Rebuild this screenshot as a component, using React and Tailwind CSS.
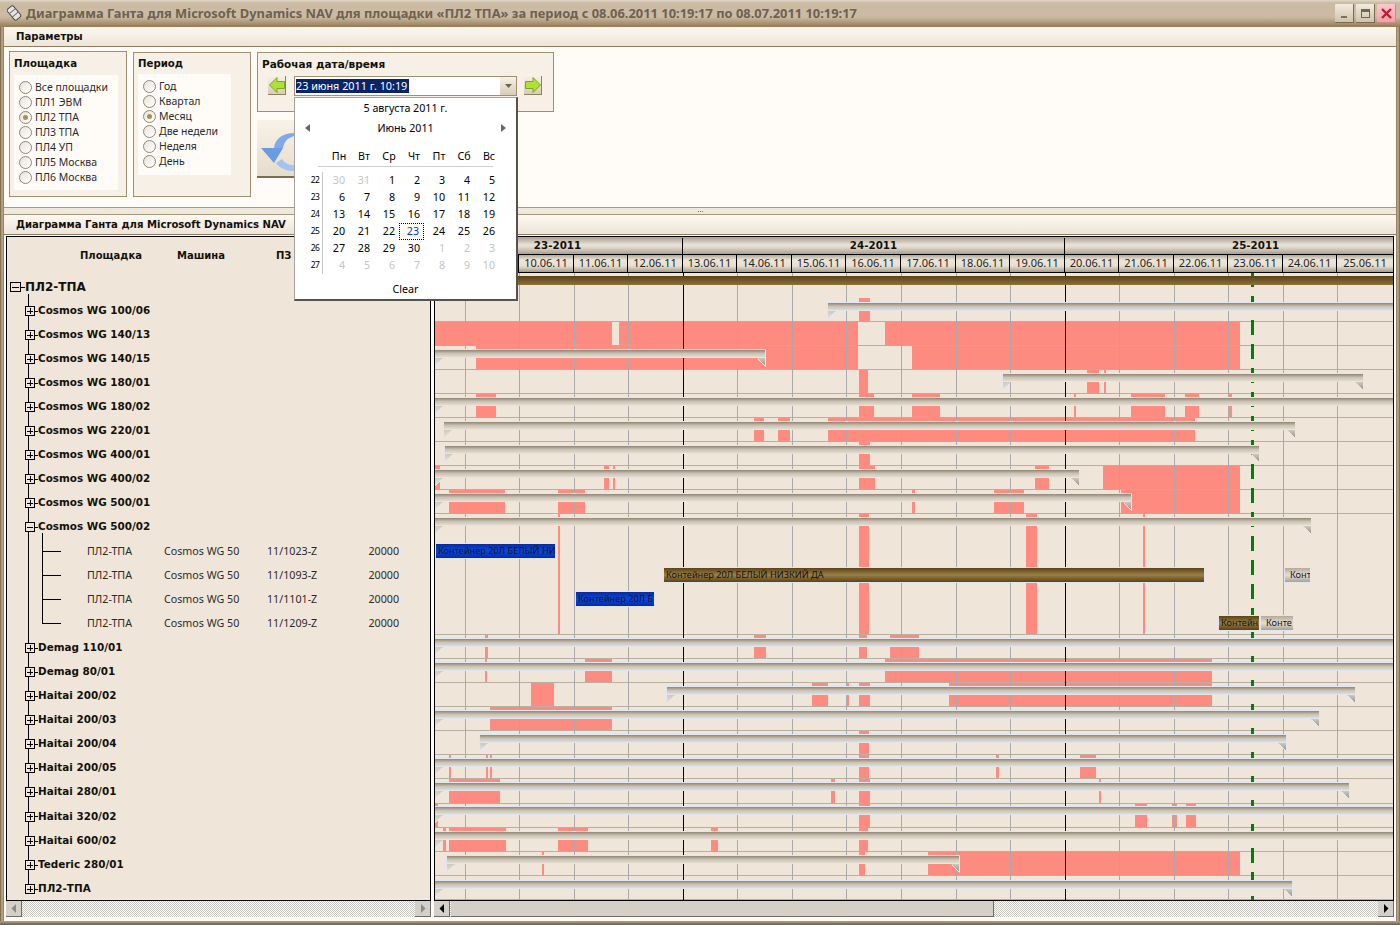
import React from "react";

const gridX = [465, 519, 574, 628, 683, 737, 792, 846, 901, 956, 1010, 1065, 1119, 1174, 1228, 1283, 1337];
const days = ["08.06.11","09.06.11","10.06.11","11.06.11","12.06.11","13.06.11","14.06.11","15.06.11","16.06.11","17.06.11","18.06.11","19.06.11","20.06.11","21.06.11","22.06.11","23.06.11","24.06.11","25.06.11"];
const edges = [435, ...gridX, 1393];

const rows = [
  { h: 24, s: [[859, 870]], b: [828, 1393, 302] },
  { h: 24, s: [[435, 612], [619, 858], [885, 1240]] },
  { h: 24, s: [[476, 858], [912, 1240]], b: [435, 765, 349] },
  { h: 24, s: [[859, 868], [1087, 1099], [1104, 1106]], b: [1003, 1363, 373] },
  { h: 24, s: [[476, 496], [859, 874], [912, 940], [1074, 1076], [1131, 1165], [1185, 1199], [1229, 1232]], b: [435, 1393, 397] },
  { h: 24, s: [[754, 764], [778, 790], [828, 1195]], b: [444, 1295, 421] },
  { h: 24, s: [[859, 870]], b: [445, 1259, 445] },
  { h: 24, s: [[435, 440], [604, 609], [613, 615], [859, 875], [1035, 1049], [1103, 1240]], b: [435, 1079, 469] },
  { h: 24, s: [[449, 505], [558, 585], [912, 915], [994, 1024], [1121, 1240]], b: [435, 1131, 493] },
  { h: 121, s: [[558, 560], [859, 869], [1026, 1037], [1143, 1145]], b: [435, 1311, 517], tasks: true },
  { h: 24, s: [[485, 488], [754, 766], [859, 867], [890, 919]], b: [435, 1393, 638] },
  { h: 24, s: [[485, 487], [585, 612], [885, 1212]], b: [435, 1393, 662] },
  { h: 24, s: [[531, 554], [812, 828], [846, 849], [859, 870], [949, 1212]], b: [667, 1355, 686] },
  { h: 24, s: [[490, 612]], b: [435, 1319, 710] },
  { h: 24, s: [[859, 869]], b: [480, 1286, 734] },
  { h: 24, s: [[449, 451], [486, 488], [490, 492], [859, 869], [996, 999], [1080, 1096]], b: [435, 1393, 758] },
  { h: 25, s: [[449, 500], [831, 835], [859, 870], [1099, 1101]], b: [435, 1349, 782] },
  { h: 24, s: [[435, 438], [859, 870], [1135, 1147], [1172, 1177], [1186, 1196]], b: [435, 1393, 806] },
  { h: 24, s: [[443, 446], [449, 506], [558, 588], [711, 718], [859, 868]], b: [435, 1393, 831] },
  { h: 24, s: [[542, 544], [859, 865], [928, 1240]], b: [447, 959, 855] },
  { h: 24, s: [], b: [435, 1292, 880] },
];

const tasks = [
  { x: 435, w: 121, y: 543, c: "blue", t: "Контейнер 20Л БЕЛЫЙ НИ" },
  { x: 663, w: 542, y: 567, c: "brown", t: "Контейнер 20Л БЕЛЫЙ НИЗКИЙ ДА" },
  { x: 1284, w: 27, y: 567, c: "gray", t: "Конт" },
  { x: 575, w: 80, y: 591, c: "blue", t: "Контейнер 20Л Б" },
  { x: 1218, w: 42, y: 615, c: "brown", t: "Контейн" },
  { x: 1260, w: 34, y: 615, c: "gray", t: "Конте" },
];

const taskClass = {
  blue: "pl-[2px] bg-gradient-to-b from-[#0a2c9c] via-[#0648e4] to-[#0a2c9c]",
  brown: "pl-[2px] bg-gradient-to-b from-[#5c4318] via-[#9a8048] to-[#5c4318]",
  gray: "pl-[5px] bg-gradient-to-b from-[#b3aa9a] via-[#e6dfd4] to-[#aaa191]",
};

const machines = [
  "Cosmos WG 100/06", "Cosmos WG 140/13", "Cosmos WG 140/15", "Cosmos WG 180/01", "Cosmos WG 180/02",
  "Cosmos WG 220/01", "Cosmos WG 400/01", "Cosmos WG 400/02", "Cosmos WG 500/01",
];
const machinesAfter = [
  ["Demag 110/01", 24], ["Demag 80/01", 24], ["Haitai 200/02", 24], ["Haitai 200/03", 24], ["Haitai 200/04", 24],
  ["Haitai 200/05", 24], ["Haitai 280/01", 24], ["Haitai 320/02", 25], ["Haitai 600/02", 24], ["Tederic 280/01", 24], ["ПЛ2-ТПА", 24],
];
const children = ["11/1023-Z", "11/1093-Z", "11/1101-Z", "11/1209-Z"];

const BOLD = "[font-family:'DejaVu_Sans',sans-serif] font-bold";

function Radio({ label, checked }) {
  return (
    <div className="flex h-[15px] items-center gap-[3px] text-[10.5px] text-[#2b2b2b]">
      <span className="flex h-[13px] w-[13px] items-center justify-center rounded-full border border-[#8d8777] bg-gradient-to-br from-[#e9e4da] to-[#ffffff]">
        {checked && <span className="h-[5px] w-[5px] rounded-full bg-[#ab8c5c]" />}
      </span>
      <span>{label}</span>
    </div>
  );
}

function Section({ children }) {
  return (
    <div className={`flex h-[20px] items-center border-b border-[#8f7f60] bg-gradient-to-b from-[#fdf9f2] to-[#ece4d7] pl-3 pt-px text-[10.1px] text-[#14110c] ${BOLD}`}>
      {children}
    </div>
  );
}

function Expander({ open }) {
  return (
    <span className="relative flex h-[10px] w-[10px] shrink-0 items-center justify-center border border-black bg-[#efe6d9]">
      <span className="h-px w-[6px] bg-black" />
      {!open && <span className="absolute h-[6px] w-px bg-black" />}
    </span>
  );
}

function Machine({ name, h = 24, open }) {
  return (
    <div className="relative flex items-center pl-[18px]" style={{ height: h }}>
      <Expander open={open} />
      <span className="h-px w-[3px] bg-black" />
      <span className={`text-[10.4px] text-[#14110c] ${BOLD}`}>{name}</span>
    </div>
  );
}

function ScrollBtn({ dir, dark }) {
  return (
    <div className="flex h-full w-[16px] shrink-0 items-center justify-center border-b border-r border-[#6f6c66] border-t-white border-l-white bg-[#d4d0c8]">
      <svg width="6" height="9" viewBox="0 0 6 9">
        <polygon points={dir === "l" ? "5,0 5,9 0.5,4.5" : "1,0 1,9 5.5,4.5"} fill={dark ? "#000" : "#8c8a85"} />
      </svg>
    </div>
  );
}

const CHECKER = "bg-[repeating-conic-gradient(#c9c7c1_0_25%,#ffffff_0_50%)] bg-[length:2px_2px]";

function Notch({ side }) {
  return side === "l" ? (
    <svg width="9" height="9" viewBox="0 0 9 9" className="absolute left-[-1px] top-[8px]">
      <polygon points="0,0 9,0 0,9" fill="url(#notchL)" />
      <path d="M0.5 0V8.5L8 1" stroke="#e2e8f0" fill="none" />
    </svg>
  ) : (
    <svg width="9" height="9" viewBox="0 0 9 9" className="absolute right-[-1px] top-[8px]">
      <polygon points="9,0 0,0 9,9" fill="url(#notchR)" />
      <path d="M8.5 0V8.5L1 1" stroke="#e2e8f0" fill="none" />
    </svg>
  );
}

function Bar({ x1, x2, y }) {
  const open = x2 >= 1393;
  const inset = x1 > 435;
  const left = inset ? x1 - 436 : 0;
  const right = open ? 958 : x2 - 434;
  return (
    <div
      className={`absolute z-30 h-[9px] border-y border-[#dfe6f0] bg-gradient-to-b from-[#918776] via-[#cbc3b5] to-[#e2dbcf] ${open ? "" : "border-r"} ${inset ? "border-l" : ""}`}
      style={{ left, width: right - left, top: y }}
    >
      <Notch side="l" />
      {!open && <Notch side="r" />}
    </div>
  );
}

function ChartRow({ row, top }) {
  return (
    <div className="relative border-b border-[#b5afa6]" style={{ height: row.h }}>
      {row.s.map(([a, b]) => (
        <div key={a} className="absolute inset-y-0 bg-[#fd8b80]" style={{ left: a - 435, width: b - a }} />
      ))}
      {row.b && <Bar x1={row.b[0]} x2={row.b[1]} y={row.b[2] - top} />}
      {row.tasks &&
        tasks.map((t) => (
          <div
            key={t.x}
            className={`absolute z-30 flex h-[16px] items-center overflow-hidden whitespace-nowrap border border-[#dfe6f0] text-[9.2px] leading-none text-[#15130f] ${taskClass[t.c]}`}
            style={{ left: t.x - 435, width: t.w, top: t.y - top }}
          >
            {t.t}
          </div>
        ))}
    </div>
  );
}

function GreenArrow({ dir }) {
  return (
    <div className="flex h-[19px] w-[18px] items-center justify-center border-b border-r border-[#8f7f60] bg-gradient-to-b from-[#f7f1e6] to-[#d8ccb8]">
      <svg width="16" height="16" viewBox="0 0 16 16">
        <polygon
          points={dir === "l" ? "0.5,8 8,0.5 8,4.5 15.5,4.5 15.5,11.5 8,11.5 8,15.5" : "15.5,8 8,0.5 8,4.5 0.5,4.5 0.5,11.5 8,11.5 8,15.5"}
          fill="#aee03a"
          stroke="#7ba81f"
        />
      </svg>
    </div>
  );
}

function Calendar() {
  const weeks = [
    [22, ["30", "31", 1, 2, 3, 4, 5]],
    [23, [6, 7, 8, 9, 10, 11, 12]],
    [24, [13, 14, 15, 16, 17, 18, 19]],
    [25, [20, 21, 22, 23, 24, 25, 26]],
    [26, [27, 28, 29, 30, "1", "2", "3"]],
    [27, ["4", "5", "6", "7", "8", "9", "10"]],
  ];
  return (
    <div className="absolute left-[294px] top-[97px] z-50 h-[204px] w-[224px] border border-[#a5a29c] border-b-2 border-r-2 border-b-[#55534e] border-r-[#55534e] bg-white text-[10.7px] text-black">
      <div className="flex h-[21px] items-center justify-center">5 августа 2011 г.</div>
      <div className="flex h-[18px] items-center justify-between px-[10px]">
        <svg width="5" height="8" viewBox="0 0 5 8"><polygon points="5,0 5,8 0,4" fill="#6b675e" /></svg>
        <span>Июнь 2011</span>
        <svg width="5" height="8" viewBox="0 0 5 8"><polygon points="0,0 0,8 5,4" fill="#6b675e" /></svg>
      </div>
      <div className="ml-[23px] mt-[12px] flex h-[18px] w-[175px] items-center border-b border-[#cfcfcf] pb-[2px] pl-[6px]">
        {["Пн", "Вт", "Ср", "Чт", "Пт", "Сб", "Вс"].map((d) => (
          <span key={d} className="w-[25px] shrink-0 pl-[5px] text-center">{d}</span>
        ))}
      </div>
      <div className="ml-[14px] mt-[5px] flex flex-col">
        {weeks.map(([w, cells]) => (
          <div key={w} className="flex h-[17px] items-center">
            <span className="flex h-[17px] w-[14px] items-center justify-center border-r border-[#c8c8c8] pr-px text-[8.5px] tracking-[-0.5px]">{w}</span>
            <span className="w-px" />
            {cells.map((c, i) => {
              const muted = typeof c === "string";
              const today = c === 23;
              return (
                <span
                  key={i}
                  className={`flex h-[17px] w-[25px] items-center justify-end pr-[4px] ${muted ? "text-[#c4c4c4]" : ""} ${today ? "border border-dotted border-black bg-[#fffbf0] text-[#0a2ee6]" : ""}`}
                >
                  {c}
                </span>
              );
            })}
          </div>
        ))}
      </div>
      <div className="mt-[7px] text-center">Clear</div>
    </div>
  );
}

export default function App() {
  let top = 298;
  const placed = rows.map((r) => {
    const t = top;
    top += r.h;
    return [r, t];
  });
  return (
    <div className="relative flex h-[925px] w-[1400px] flex-col overflow-hidden bg-[#b7a486] [font-family:'Noto_Sans',sans-serif]">
      <svg className="absolute h-0 w-0">
        <defs>
          <linearGradient id="notchL" x1="0" y1="0" x2="0" y2="1">
            <stop offset="0" stopColor="#cfc8bb" />
            <stop offset="1" stopColor="#efe6d9" />
          </linearGradient>
          <linearGradient id="notchR" x1="0" y1="0" x2="0" y2="1">
            <stop offset="0" stopColor="#cfc8bb" />
            <stop offset="1" stopColor="#8f8b86" />
          </linearGradient>
        </defs>
      </svg>

      {/* title bar */}
      <div className="flex h-[27px] shrink-0 items-center bg-[linear-gradient(#e0d6c6_0,#cbbba2_3px,#cbbba2_17px,#957a54_27px)] pl-[7px] pr-[4px]">
        <svg width="15" height="17" viewBox="0 0 15 17" className="shrink-0">
          <g transform="rotate(-40 7 8)">
            <rect x="3" y="1" width="8" height="14" rx="2" fill="#e4e4e2" stroke="#4e4a44" />
            <path d="M3 5.5H11M3 10H11" stroke="#77736b" />
          </g>
        </svg>
        <span className="ml-[4px] whitespace-nowrap pt-px text-[12.9px] font-bold text-[#6d6152] [font-family:'Noto_Sans',sans-serif]">
          Диаграмма Ганта для Microsoft Dynamics NAV для площадки «ПЛ2 ТПА» за период с 08.06.2011 10:19:17 по 08.07.2011 10:19:17
        </span>
        <div className="ml-auto flex gap-[2px]">
          <div className="flex h-[19px] w-[19px] items-end justify-center rounded-[1px] border-b border-r border-[#7c6d50] bg-gradient-to-b from-[#f2ebdd] to-[#cfc3ae] pb-[4px]">
            <span className="h-[2px] w-[6px] bg-[#7c7258]" />
          </div>
          <div className="flex h-[19px] w-[19px] items-center justify-center rounded-[1px] border-b border-r border-[#7c6d50] bg-gradient-to-b from-[#f2ebdd] to-[#cfc3ae]">
            <span className="h-[9px] w-[9px] border border-t-[3px] border-[#6e6654]" />
          </div>
          <div className="flex h-[19px] w-[19px] items-center justify-center rounded-[1px] border-b border-r border-[#c98a8a] bg-gradient-to-b from-[#ffc8cc] to-[#f4a0a8]">
            <svg width="11" height="11" viewBox="0 0 11 11"><path d="M1 1L10 10M10 1L1 10" stroke="#b5202a" strokeWidth="2.4" /></svg>
          </div>
        </div>
      </div>

      <div className="flex min-h-0 flex-1">
        <div className="w-[4px] shrink-0 bg-gradient-to-r from-[#6f5c3e] via-[#c3b094] to-[#8a7554]" />
        <div className="flex min-w-0 flex-1 flex-col bg-[#fffcf7]">
          <Section>Параметры</Section>

          {/* parameters */}
          <div className="flex h-[161px] shrink-0 items-start gap-[6px] border-b border-[#a8987c] bg-[#fffcf7] pl-[5px] pt-[4px]">
            <div className="h-[146px] w-[118px] border border-[#9f8f72] bg-[#f6f0e6] pl-[4px]">
              <div className={`flex h-[23px] items-center text-[10.2px] text-[#14110c] ${BOLD}`}>Площадка</div>
              <div className="h-[115px] w-[104px] bg-[#fffcf7] pl-[5px] pt-[5px]">
                {["Все площадки", "ПЛ1 ЭВМ", "ПЛ2 ТПА", "ПЛ3 ТПА", "ПЛ4 УП", "ПЛ5 Москва", "ПЛ6 Москва"].map((l) => (
                  <Radio key={l} label={l} checked={l === "ПЛ2 ТПА"} />
                ))}
              </div>
            </div>
            <div className="mt-px h-[145px] w-[118px] border border-[#9f8f72] bg-[#f6f0e6] pl-[4px]">
              <div className={`flex h-[21px] items-center pt-px text-[10.2px] text-[#14110c] ${BOLD}`}>Период</div>
              <div className="h-[101px] w-[93px] bg-[#fffcf7] pl-[5px] pt-[5px]">
                {["Год", "Квартал", "Месяц", "Две недели", "Неделя", "День"].map((l) => (
                  <Radio key={l} label={l} checked={l === "Месяц"} />
                ))}
              </div>
            </div>
            <div className="mt-px flex flex-col">
              <div className="h-[60px] w-[297px] border border-[#9f8f72] bg-[#f6f0e6] pl-[4px]">
                <div className={`flex h-[22px] items-center pt-px text-[10.5px] text-[#14110c] ${BOLD}`}>Рабочая дата/время</div>
                <div className="mt-px flex items-start pl-[6px]">
                  <GreenArrow dir="l" />
                  <div className="ml-[8px] flex h-[20px] w-[223px] items-center border border-[#9f8f72] bg-white pl-px">
                    <span className="flex h-[14px] w-[113px] items-center overflow-hidden whitespace-nowrap bg-[#0a246a] pt-px text-[10.8px] text-white">23 июня 2011 г. 10:19</span>
                    <div className="ml-auto flex h-full w-[16px] items-center justify-center bg-gradient-to-b from-[#f7f1e6] to-[#d8ccb8]">
                      <svg width="7" height="4" viewBox="0 0 7 4"><polygon points="0,0 7,0 3.5,4" fill="#6d6350" /></svg>
                    </div>
                  </div>
                  <span className="w-[7px]" />
                  <GreenArrow dir="r" />
                </div>
              </div>
              <div className="mt-[8px] flex h-[58px] w-[58px] items-start overflow-hidden border-b-2 border-r border-[#7d6d50] bg-gradient-to-b from-[#f8f2e8] to-[#e6dccb] pl-[3px] pt-[9px]">
                <svg width="52" height="46" viewBox="0 0 52 46">
                  <path d="M14 19C15 9 24 3 38 4L32 8C26 10 24 14 23 19Z" fill="#7ea9ea" />
                  <polygon points="1,19 23,19 14,34" fill="#6a9ce4" />
                  <path d="M16 34C22 42 32 43 38 41L38 36C30 37 24 34 22 30Z" fill="#a4c3f0" />
                </svg>
              </div>
            </div>
          </div>

          {/* splitter */}
          <div className="flex h-[7px] shrink-0 items-center justify-center gap-px border-b border-[#a8987c] bg-[#efe8dc]">
            <span className="h-px w-px bg-[#8a7c64]" />
            <span className="h-px w-px bg-[#8a7c64]" />
            <span className="h-px w-px bg-[#8a7c64]" />
          </div>

          <Section>Диаграмма Ганта для Microsoft Dynamics NAV</Section>

          {/* gantt area */}
          <div className="flex min-h-0 flex-1 gap-[3px] bg-[#fffcf7] pl-[2px] pr-[2px] pt-px">
            {/* tree */}
            <div className="flex w-[425px] shrink-0 flex-col">
              <div className="relative h-[665px] overflow-hidden border border-black bg-[#efe6d9]">
                <div className={`flex h-[38px] items-center pb-[2px] pl-[73px] text-[10px] text-[#14110c] ${BOLD}`}>
                  <span className="w-[97px]">Площадка</span>
                  <span className="w-[99px]">Машина</span>
                  <span>ПЗ</span>
                </div>
                <div className="absolute left-[21px] top-[57px] h-[595px] w-px bg-black" />
                <div className="relative flex h-[24px] items-center pl-[3px]">
                  <span className="relative flex h-[10px] w-[11px] items-center justify-center border border-black bg-[#efe6d9]">
                    <span className="h-px w-[7px] bg-black" />
                  </span>
                  <span className="h-px w-[4px] bg-black" />
                  <span className={`text-[12px] text-[#14110c] ${BOLD}`}>ПЛ2-ТПА</span>
                </div>
                {machines.map((m) => (
                  <Machine key={m} name={m} />
                ))}
                <Machine name="Cosmos WG 500/02" open />
                <div className="relative">
                  <div className="absolute left-[35px] top-[-6px] h-[91px] w-px bg-black" />
                  {children.map((c) => (
                    <div key={c} className="flex h-[24px] items-center text-[10.7px] text-[#2b2b2b]">
                      <span className="ml-[36px] h-px w-[18px] bg-black" />
                      <span className="ml-[26px] w-[77px]">ПЛ2-ТПА</span>
                      <span className="w-[103px] whitespace-nowrap">Cosmos WG 50</span>
                      <span className="w-[70px]">{c}</span>
                      <span className="w-[62px] text-right">20000</span>
                    </div>
                  ))}
                  <div className="h-px" />
                </div>
                {machinesAfter.map(([m, h]) => (
                  <Machine key={m} name={m} h={h} />
                ))}
              </div>
              <div className={`flex h-[16px] shrink-0 ${CHECKER}`}>
                <ScrollBtn dir="l" />
                <div className="flex-1" />
                <ScrollBtn dir="r" />
              </div>
            </div>

            {/* chart */}
            <div className="flex min-w-0 flex-1 flex-col">
              <div className="relative h-[665px] overflow-hidden border border-black bg-[#efe6d9]">
                <div className="flex h-[18px] border-b border-black bg-[linear-gradient(#a89e8e_0,#e8e1d5_45%,#e2dacd_60%,#aa9f8e_100%)] pt-px text-[10.3px] text-[#14110c]">
                  <div className={`flex w-[248px] items-center justify-center border-r border-black pr-[2px] ${BOLD}`}>23-2011</div>
                  <div className={`flex w-[382px] items-center justify-center border-r border-black ${BOLD}`}>24-2011</div>
                  <div className={`flex flex-1 items-center pl-[167px] ${BOLD}`}>25-2011</div>
                </div>
                <div className="flex h-[18px] border-b border-black bg-[linear-gradient(#b3a999_0,#ece6da_30%,#e6dfd2_65%,#a69b89_100%)]">
                  {days.map((d, i) => (
                    <div
                      key={d}
                      className="flex items-center justify-center overflow-hidden border-r border-black text-[11px] text-[#262320] last:border-r-0"
                      style={{ width: edges[i + 1] - edges[i] }}
                    >
                      {i > 1 ? d : ""}
                    </div>
                  ))}
                </div>
                <div className="relative h-[627px] overflow-hidden">
                  <div className="h-[25px] pt-[3px]">
                    <div className="relative z-30 h-[9px] bg-gradient-to-b from-[#5c4318] to-[#8b7239]" />
                  </div>
                  {placed.map(([r, t]) => (
                    <ChartRow key={t} row={r} top={t} />
                  ))}
                  {gridX.map((x) => (
                    <div
                      key={x}
                      className={`absolute inset-y-0 z-10 w-px ${x === 683 || x === 1065 ? "bg-black" : "bg-[#a9a9a9]"}`}
                      style={{ left: x - 435 }}
                    />
                  ))}
                  <div className="absolute inset-y-0 left-[816px] z-20 w-[3px] bg-[repeating-linear-gradient(to_bottom,#007f0a_0,#007f0a_14px,transparent_14px,transparent_23px,#007f0a_23px,#007f0a_24px)]" />
                </div>
              </div>
              <div className={`flex h-[16px] shrink-0 ${CHECKER}`}>
                <ScrollBtn dir="l" dark />
                <div className="ml-px w-[543px] border-b border-r border-[#6f6c66] bg-[#d4d0c8]" />
                <div className="flex-1" />
                <ScrollBtn dir="r" dark />
              </div>
            </div>
          </div>
          <div className="h-[4px] shrink-0" />
        </div>
        <div className="w-[4px] shrink-0 bg-gradient-to-r from-[#8a7554] via-[#c3b094] to-[#6f5c3e]" />
      </div>
      <div className="h-[4px] shrink-0 bg-gradient-to-b from-[#b8a688] to-[#6f5c3e]" />

      <Calendar />
    </div>
  );
}
